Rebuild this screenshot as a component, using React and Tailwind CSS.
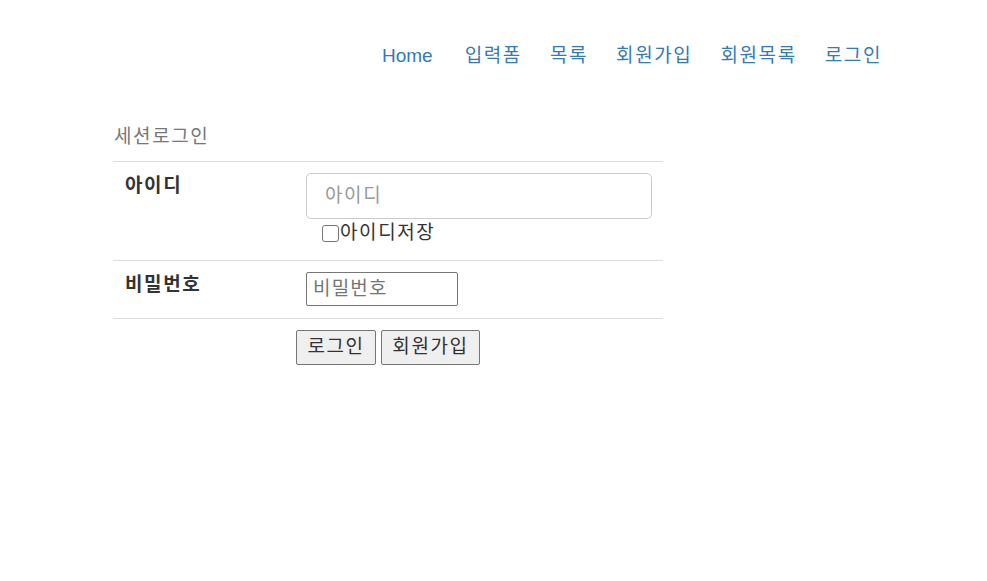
import React from "react";

const font = { fontFamily: '"Liberation Sans", "Noto Sans CJK KR", sans-serif' };

export default function App() {
  const links = ["입력폼", "목록", "회원가입", "회원목록", "로그인"];
  return (
    <div className="w-[987px] h-[581px] bg-white text-[#333]" style={font}>
      <nav className="flex justify-end pr-[105px] pt-[42px]">
        <a className="text-[19px] leading-[28px] text-[#337ab7] mr-[32px]">Home</a>
        <div className="flex gap-[28px]">
          {links.map((l) => (
            <a key={l} className="text-[19px] tracking-[1.6px] leading-[28px] text-[#337ab7]">
              {l}
            </a>
          ))}
        </div>
      </nav>
      <div className="ml-[113px] mt-[54px] w-[550px]">
        <div className="text-[19px] tracking-[1.6px] leading-[26px] text-[#777] pl-[1px] pb-[11px]">세션로그인</div>
        <div className="border-t border-[#ddd]">
          <div className="flex border-b border-[#ddd] pt-[11px] pb-[14px]">
            <div className="w-[183px] pl-[12px] font-bold text-[19px] tracking-[1.6px] leading-[26px]">아이디</div>
            <div className="flex-1 pl-[10px] pr-[11px]">
              <input
                placeholder="아이디"
                className="w-full h-[46px] border border-[#ccc] rounded-[5px] px-[18px] text-[19px] tracking-[1.6px] placeholder:text-[#999] outline-none"
                style={font}
              />
              <label className="flex items-center ml-[16px] mt-[1px] text-[19px] tracking-[1.6px] leading-[26px]">
                <span className="w-[17px] h-[17px] border border-[#767676] rounded-[3px] mr-[1px] bg-white" />
                아이디저장
              </label>
            </div>
          </div>
          <div className="flex border-b border-[#ddd] pt-[11px] pb-[12px]">
            <div className="w-[183px] pl-[12px] font-bold text-[19px] tracking-[1.6px] leading-[26px]">비밀번호</div>
            <div className="flex-1 pl-[10px]">
              <input
                placeholder="비밀번호"
                className="w-[152px] h-[34px] border border-[#767676] rounded-[2px] px-[6px] text-[19px] tracking-[1.2px] placeholder:text-[#757575] outline-none"
                style={font}
              />
            </div>
          </div>
          <div className="flex justify-center gap-[5px] pt-[11px]">
            <button className="h-[35px] w-[80px] bg-[#efefef] border border-[#767676] rounded-[2px] text-[19px] tracking-[1.6px]" style={font}>
              로그인
            </button>
            <button className="h-[35px] w-[99px] bg-[#efefef] border border-[#767676] rounded-[2px] text-[19px] tracking-[1.6px]" style={font}>
              회원가입
            </button>
          </div>
        </div>
      </div>
    </div>
  );
}
